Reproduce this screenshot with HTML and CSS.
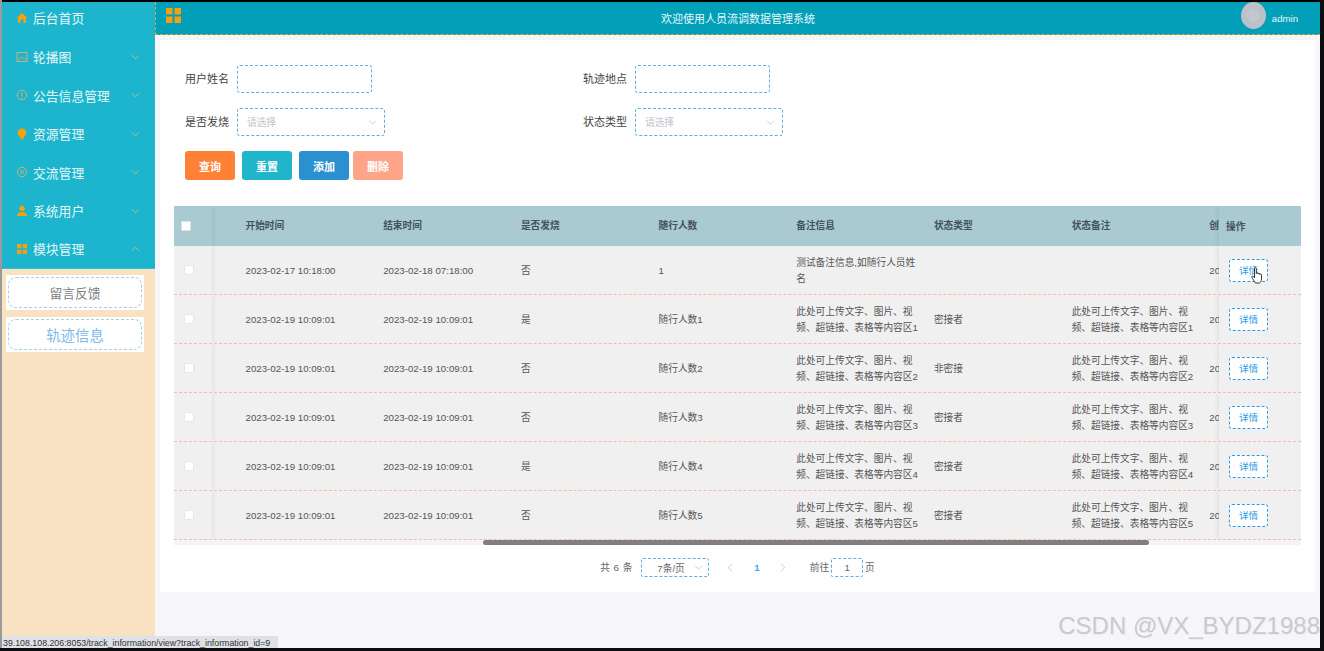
FILE: index.html
```html
<!DOCTYPE html>
<html>
<head>
  <meta charset="UTF-8">
  <title>轨迹信息</title>
  <link rel="stylesheet" href="styles.css">
</head>
<body>
  <div class="window">
    <!-- 左侧菜单 -->
    <aside class="sidebar">
      <ul class="menu">
        <li class="menu-item">
          <svg class="menu-icon" viewBox="0 0 12 12"><path d="M6 1 L11.5 6 L10 6 L10 11 L7.5 11 L7.5 7.5 L4.5 7.5 L4.5 11 L2 11 L2 6 L.5 6 Z" fill="#f5a00f"/></svg>
          <span>后台首页</span>
        </li>
        <li class="menu-item">
          <svg class="menu-icon" viewBox="0 0 12 12"><rect x="1" y="1.5" width="10" height="9" fill="none" stroke="#c9b27a" stroke-width="1"/><path d="M2 9.5 L5 6 L7 8 L8.500 6.800 L10 9" fill="none" stroke="#c9b27a" stroke-width=".8"/></svg>
          <span>轮播图</span>
          <svg class="chevron" viewBox="0 0 10 6"><path d="M1 1 L5 5 L9 1" /></svg>
        </li>
        <li class="menu-item">
          <svg class="menu-icon" viewBox="0 0 12 12"><circle cx="6" cy="6" r="4.700" fill="none" stroke="#c9b27a" stroke-width="1"/><path d="M6 3 V7 M6 8 V9" stroke="#c9b27a" stroke-width="1"/></svg>
          <span>公告信息管理</span>
          <svg class="chevron" viewBox="0 0 10 6"><path d="M1 1 L5 5 L9 1" /></svg>
        </li>
        <li class="menu-item">
          <svg class="menu-icon" viewBox="0 0 12 12"><path d="M6 .5 A4.300 4.300 0 0 1 8.500 8.300 L8 10 L4 10 L3.500 8.300 A4.300 4.300 0 0 1 6 .5 Z" fill="#f5a00f"/><rect x="4.500" y="10.500" width="3" height="1" fill="#f5a00f"/></svg>
          <span>资源管理</span>
          <svg class="chevron" viewBox="0 0 10 6"><path d="M1 1 L5 5 L9 1" /></svg>
        </li>
        <li class="menu-item">
          <svg class="menu-icon" viewBox="0 0 12 12"><circle cx="6" cy="6" r="4.600" fill="none" stroke="#c9b27a" stroke-width="1"/><path d="M3.800 5 H8.200 M3.800 7 H8.200" stroke="#c9b27a" stroke-width=".9"/></svg>
          <span>交流管理</span>
          <svg class="chevron" viewBox="0 0 10 6"><path d="M1 1 L5 5 L9 1" /></svg>
        </li>
        <li class="menu-item">
          <svg class="menu-icon" viewBox="0 0 12 12"><circle cx="6" cy="3.500" r="2.700" fill="#f5a00f"/><path d="M1 11 C1 8 3 7 6 7 C9 7 11 8 11 11 Z" fill="#f5a00f"/></svg>
          <span>系统用户</span>
          <svg class="chevron" viewBox="0 0 10 6"><path d="M1 1 L5 5 L9 1" /></svg>
        </li>
        <li class="menu-item">
          <svg class="menu-icon" viewBox="0 0 12 12"><path d="M1 1 H5.300 V5.300 H1 Z M6.700 1 H11 V5.300 H6.700 Z M1 6.700 H5.300 V11 H1 Z M6.700 6.700 H11 V11 H6.700 Z" fill="#f5a00f"/></svg>
          <span>模块管理</span>
          <svg class="chevron" viewBox="0 0 10 6"><path d="M1 5 L5 1 L9 5" /></svg>
        </li>
      </ul>
      <div class="submenu">
        <div class="sub-item"><span>留言反馈</span></div>
        <div class="sub-item sub-active"><span>轨迹信息</span></div>
      </div>
    </aside>

    <div class="main">
      <!-- 顶部栏 -->
      <header class="topbar">
        <svg class="top-icon" viewBox="0 0 15 15"><path d="M0 0 H6.500 V6.500 H0 Z M8.500 0 H15 V6.500 H8.500 Z M0 8.500 H6.500 V15 H0 Z M8.500 8.500 H15 V15 H8.500 Z" fill="#f5a00f"/></svg>
        <div class="top-title">欢迎使用人员流调数据管理系统</div>
        <svg class="avatar" viewBox="0 0 25 27"><ellipse cx="12.500" cy="13.500" rx="12.500" ry="13.500" fill="#bcc0c8"/><path d="M7 16 C4 15 4 11 7.500 11 C7.500 7 12 5.500 14.500 8 C17.500 7.500 19.500 10.500 18 13 C20 15 18 17.500 16 17 L14 20 L10 20 Z" fill="#c2c6cd"/></svg>
        <div class="top-user">admin</div>
      </header>

      <div class="panel">
        <!-- 搜索区 -->
        <div class="search-form">
          <div class="form-row">
            <div class="field">
              <label>用户姓名</label>
              <div class="input"></div>
            </div>
            <div class="field">
              <label>轨迹地点</label>
              <div class="input"></div>
            </div>
          </div>
          <div class="form-row">
            <div class="field">
              <label>是否发烧</label>
              <div class="select">
                <span>请选择</span>
                <svg class="select-arrow" viewBox="0 0 10 6"><path d="M1 1 L5 5 L9 1" /></svg>
              </div>
            </div>
            <div class="field">
              <label>状态类型</label>
              <div class="select">
                <span>请选择</span>
                <svg class="select-arrow" viewBox="0 0 10 6"><path d="M1 1 L5 5 L9 1" /></svg>
              </div>
            </div>
          </div>
          <div class="form-buttons">
            <button class="btn btn-query">查询</button>
            <button class="btn btn-reset">重置</button>
            <button class="btn btn-add">添加</button>
            <button class="btn btn-delete">删除</button>
          </div>
        </div>

        <!-- 数据表格 -->
        <div class="table">
          <div class="row head-row">
            <div class="check-cell"><i class="check head-check"></i></div>
            <div class="cols">
              <div class="col">开始时间</div>
              <div class="col">结束时间</div>
              <div class="col">是否发烧</div>
              <div class="col">随行人数</div>
              <div class="col">备注信息</div>
              <div class="col">状态类型</div>
              <div class="col">状态备注</div>
              <div class="col">创建时间</div>
            </div>
            <div class="op-cell">操作</div>
          </div>

          <div class="row">
            <div class="check-cell"><i class="check"></i></div>
            <div class="cols">
              <div class="col">2023-02-17 10:18:00</div>
              <div class="col">2023-02-18 07:18:00</div>
              <div class="col">否</div>
              <div class="col">1</div>
              <div class="col">测试备注信息,如随行人员姓名</div>
              <div class="col"></div>
              <div class="col"></div>
              <div class="col">2023-02-17</div>
            </div>
            <div class="op-cell">
              <button class="detail-btn">详情</button>
              <svg class="hand-cursor" viewBox="0 0 12 17"><path d="M3.500 1.500 C3.500 .3 5.300 .3 5.300 1.500 L5.300 6.500 C5.300 5.500 7 5.500 7 6.500 L7 7 C7 6 8.700 6 8.700 7 L8.700 7.500 C8.700 6.600 10.500 6.600 10.500 7.800 L10.500 12 C10.500 14 9.500 15.500 8.500 16 L4.500 16 C3.500 15 2.500 13 1 10.500 C.3 9.200 1.700 8.500 2.500 9.500 L3.500 10.800 Z" fill="#fff" stroke="#222" stroke-width=".9" stroke-linejoin="round"/></svg>
            </div>
          </div>

          <div class="row">
            <div class="check-cell"><i class="check"></i></div>
            <div class="cols">
              <div class="col">2023-02-19 10:09:01</div>
              <div class="col">2023-02-19 10:09:01</div>
              <div class="col">是</div>
              <div class="col">随行人数1</div>
              <div class="col">此处可上传文字、图片、视频、超链接、表格等内容区1</div>
              <div class="col">密接者</div>
              <div class="col">此处可上传文字、图片、视频、超链接、表格等内容区1</div>
              <div class="col">2023-02-19</div>
            </div>
            <div class="op-cell"><button class="detail-btn">详情</button></div>
          </div>

          <div class="row">
            <div class="check-cell"><i class="check"></i></div>
            <div class="cols">
              <div class="col">2023-02-19 10:09:01</div>
              <div class="col">2023-02-19 10:09:01</div>
              <div class="col">否</div>
              <div class="col">随行人数2</div>
              <div class="col">此处可上传文字、图片、视频、超链接、表格等内容区2</div>
              <div class="col">非密接</div>
              <div class="col">此处可上传文字、图片、视频、超链接、表格等内容区2</div>
              <div class="col">2023-02-19</div>
            </div>
            <div class="op-cell"><button class="detail-btn">详情</button></div>
          </div>

          <div class="row">
            <div class="check-cell"><i class="check"></i></div>
            <div class="cols">
              <div class="col">2023-02-19 10:09:01</div>
              <div class="col">2023-02-19 10:09:01</div>
              <div class="col">否</div>
              <div class="col">随行人数3</div>
              <div class="col">此处可上传文字、图片、视频、超链接、表格等内容区3</div>
              <div class="col">密接者</div>
              <div class="col">此处可上传文字、图片、视频、超链接、表格等内容区3</div>
              <div class="col">2023-02-19</div>
            </div>
            <div class="op-cell"><button class="detail-btn">详情</button></div>
          </div>

          <div class="row">
            <div class="check-cell"><i class="check"></i></div>
            <div class="cols">
              <div class="col">2023-02-19 10:09:01</div>
              <div class="col">2023-02-19 10:09:01</div>
              <div class="col">是</div>
              <div class="col">随行人数4</div>
              <div class="col">此处可上传文字、图片、视频、超链接、表格等内容区4</div>
              <div class="col">密接者</div>
              <div class="col">此处可上传文字、图片、视频、超链接、表格等内容区4</div>
              <div class="col">2023-02-19</div>
            </div>
            <div class="op-cell"><button class="detail-btn">详情</button></div>
          </div>

          <div class="row">
            <div class="check-cell"><i class="check"></i></div>
            <div class="cols">
              <div class="col">2023-02-19 10:09:01</div>
              <div class="col">2023-02-19 10:09:01</div>
              <div class="col">否</div>
              <div class="col">随行人数5</div>
              <div class="col">此处可上传文字、图片、视频、超链接、表格等内容区5</div>
              <div class="col">密接者</div>
              <div class="col">此处可上传文字、图片、视频、超链接、表格等内容区5</div>
              <div class="col">2023-02-19</div>
            </div>
            <div class="op-cell"><button class="detail-btn">详情</button></div>
          </div>

          <div class="scroll-track"><div class="scroll-thumb"></div></div>
        </div>

        <!-- 分页 -->
        <div class="pager">
          <span class="pager-text pager-total">共 6 条</span>
          <div class="pager-size">
            <span>7条/页</span>
            <svg class="select-arrow" viewBox="0 0 10 6"><path d="M1 1 L5 5 L9 1" /></svg>
          </div>
          <svg class="pager-arrow pager-prev" viewBox="0 0 6 10"><path d="M5 1 L1 5 L5 9" /></svg>
          <span class="pager-num">1</span>
          <svg class="pager-arrow pager-next" viewBox="0 0 6 10"><path d="M1 1 L5 5 L1 9" /></svg>
          <span class="pager-text pager-goto">前往</span>
          <div class="pager-input">1</div>
          <span class="pager-text">页</span>
        </div>
      </div>
    </div>

    <!-- 浏览器状态栏和水印，盖在页面上面 -->
    <div class="status-link">39.108.108.206:8053/track_information/view?track_information_id=9</div>
    <div class="watermark">CSDN @VX_BYDZ1988</div>
  </div>
</body>
</html>
```
FILE: styles.css
```css
* {
  box-sizing: border-box;
}

html, body {
  margin: 0;
  height: 100%;
  overflow: hidden;
  background: #0c0c0e;
}

body {
  font-family: "Liberation Sans", "Noto Sans CJK SC", sans-serif;
  font-size: 9.7px;
  color: #555;
}

.window {
  position: relative;
  display: flex;
  width: 1320px;
  height: 648px;
  padding: 2px 0 0 2px;
  overflow: hidden;
  background: linear-gradient(to right, #9a9a9a 2px, #000 2px);
}

/* 左侧菜单 */
.sidebar {
  width: 153px;
  flex-shrink: 0;
  background: #f8e2c2;
}

.menu {
  list-style: none;
  margin: 0;
  padding: 0;
  background: #1cb5cd;
  border-bottom: 1px solid #35bfd4;
}

.menu-item {
  display: flex;
  align-items: center;
  height: 38.4px;
  padding: 0 15px 0 14px;
  font-size: 12.8px;
  color: #e6f8fa;
}

.menu-item:first-child {
  height: 35.75px;
  padding-bottom: 4px;
}

.menu-icon {
  width: 12px;
  height: 12px;
  margin-right: 5px;
  flex-shrink: 0;
}

.chevron {
  width: 9px;
  height: 6px;
  margin-left: auto;
  fill: none;
  stroke: #b7bd8e;
  stroke-width: 1;
}

.submenu {
  padding-top: 6px;
}

.sub-item {
  width: 138px;
  height: 35px;
  margin: 0 0 6.5px 4px;
  padding: 2px;
  background: #fff;
}

.sub-item span {
  display: flex;
  align-items: center;
  justify-content: center;
  height: 100%;
  border: 1px dashed #a9cdeb;
  border-radius: 8px;
  font-size: 12.8px;
  color: #808080;
}

.sub-active span {
  font-size: 14.4px;
  color: #7db8ee;
}

/* 右侧主体 */
.main {
  flex: 1;
  min-width: 0;
  background: #f6f5fa;
}

.topbar {
  display: flex;
  align-items: center;
  height: 33px;
  padding: 0 22px 0 10px;
  background: #019fb8;
  border-left: 1px dashed #d8a830;
  border-bottom: 1px dashed #d8a830;
  color: #fff;
}

.top-icon {
  width: 15px;
  height: 15px;
  margin-top: -5px;
}

.top-title {
  flex: 1;
  margin: 0 6px 0 60px;
  text-align: center;
  font-size: 11px;
  color: #e8f8fa;
}

.avatar {
  width: 25px;
  height: 27px;
  margin: -6px 6px 0 0;
}

.top-user {
  font-size: 9.6px;
  color: #e8f8fa;
}

.panel {
  height: 552px;
  margin: 5px 5px 0 5px;
  padding: 25px 14px 0;
  background: #fff;
}

/* 搜索区 */
.search-form {
  margin-left: 11px;
}

.form-row {
  display: flex;
  margin-bottom: 15px;
}

.field {
  display: flex;
  align-items: center;
  width: 398px;
}

.field label {
  width: 52px;
  padding-bottom: 2px;
  font-size: 11px;
  color: #444;
}

.input, .select {
  height: 28px;
  border: 1px dashed #5ab0e0;
  border-radius: 3px;
  background: #fff;
}

.input {
  width: 135px;
}

.select {
  display: flex;
  align-items: center;
  justify-content: space-between;
  width: 148px;
  padding: 0 7px 0 9px;
  color: #c0c4cc;
}

.select-arrow {
  width: 9px;
  height: 5px;
  fill: none;
  stroke: #c0c4cc;
  stroke-width: 1;
}

.form-buttons {
  display: flex;
  height: 29px;
}

.btn {
  width: 50px;
  margin-right: 7px;
  padding: 0;
  border: none;
  border-radius: 3px;
  font-family: inherit;
  font-size: 11px;
  font-weight: bold;
  color: #fff;
}

.btn-query { background: #ff8136; }
.btn-reset { background: #1fb6cc; }
.btn-add { background: #2b90d0; margin-right: 4px; }
.btn-delete { background: #ffa488; margin-right: 0; }

/* 表格 */
.table {
  margin-top: 26px;
  width: 1127px;
}

.row {
  display: flex;
  height: 49px;
  overflow: hidden;
  background: #f0f0f0;
  border-bottom: 1px dashed #f5bda6;
}

.head-row {
  height: 40px;
  background: #a8cad0;
  border-bottom: none;
  font-weight: bold;
  color: #43525c;
}

.check-cell {
  position: relative;
  z-index: 1;
  display: flex;
  align-items: center;
  justify-content: center;
  width: 38px;
  flex-shrink: 0;
  padding-right: 9px;
  box-shadow: 1px 0 5px rgba(0, 0, 0, .08);
}

.check {
  display: block;
  width: 10px;
  height: 10px;
  border: 1px solid #e6e6ee;
  border-radius: 1px;
  background: #fff;
}

.head-check {
  margin-right: 5px;
  border-color: #dcdfe6;
}

.cols {
  display: flex;
  flex: 1;
  min-width: 0;
  padding: 1px 0 0 23.5px;
  overflow: hidden;
}

.head-row .cols {
  padding-top: 0;
}

.col {
  display: flex;
  align-items: center;
  flex: 0 0 137.7px;
  padding: 0 5px 0 10px;
  line-height: 15.6px;
}

.op-cell {
  position: relative;
  z-index: 1;
  display: flex;
  align-items: center;
  width: 82px;
  flex-shrink: 0;
  padding-left: 7px;
  box-shadow: -1px 0 5px rgba(0, 0, 0, .08);
}

.detail-btn {
  width: 39px;
  height: 23px;
  margin-left: 3px;
  padding: 0;
  border: 1px dashed #2a9be8;
  border-radius: 3px;
  background: #fff;
  font-family: inherit;
  font-size: 9.6px;
  color: #2a9be8;
}

.hand-cursor {
  position: absolute;
  left: 32px;
  top: 21px;
  width: 12px;
  height: 17px;
}

.scroll-track {
  height: 5px;
  background: #f4f4f6;
}

.scroll-thumb {
  width: 666px;
  height: 5px;
  margin-left: 309px;
  border-radius: 3px;
  background: #7f7f7f;
}

/* 分页 */
.pager {
  display: flex;
  align-items: center;
  justify-content: center;
  height: 19px;
  margin-top: 13px;
  color: #666;
}

.pager-text {
  padding-bottom: 2px;
}

.pager-total {
  word-spacing: 1px;
}

.pager-size {
  display: flex;
  align-items: center;
  justify-content: space-between;
  width: 68px;
  height: 19px;
  margin-left: 9px;
  padding: 0 5px 0 15px;
  border: 1px dashed #5ab0e0;
  border-radius: 2px;
}

.pager-arrow {
  width: 6px;
  height: 9px;
  fill: none;
  stroke: #c0c4cc;
  stroke-width: 1;
}

.pager-prev {
  margin-left: 18px;
}

.pager-num {
  margin-left: 21px;
  font-weight: bold;
  color: #409eff;
}

.pager-next {
  margin-left: 20px;
}

.pager-goto {
  margin-left: 24px;
}

.pager-input {
  width: 32px;
  height: 19px;
  margin: 0 2px;
  border: 1px dashed #5ab0e0;
  border-radius: 2px;
  line-height: 17px;
  text-align: center;
}

/* 盖在页面上的部分 */
.status-link {
  position: absolute;
  left: 2px;
  bottom: 0;
  width: 276px;
  height: 12px;
  padding-left: 1px;
  overflow: hidden;
  background: #dee1e6;
  font-size: 8.8px;
  line-height: 14px;
  color: #333;
  white-space: nowrap;
}

.watermark {
  position: absolute;
  right: 0;
  bottom: 8px;
  font-size: 24px;
  line-height: 28px;
  color: #cacacd;
  text-shadow: 1px 1px 1px #eee;
  white-space: nowrap;
}
```
